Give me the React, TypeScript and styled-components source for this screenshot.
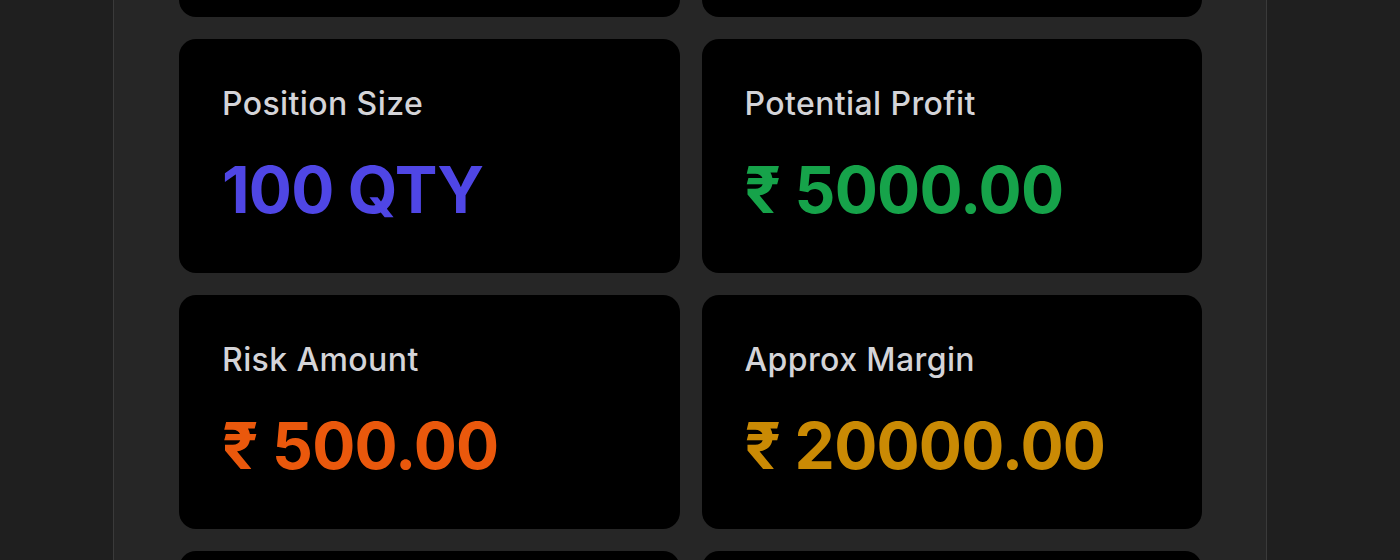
import styled, { createGlobalStyle } from "styled-components";

const GlobalStyle = createGlobalStyle`
  html, body {
    margin: 0;
    padding: 0;
    background: #1f1f1f;
    height: 100%;
    overflow: hidden;
    font-family: Inter, "Liberation Sans", sans-serif;
  }
`;

interface Stat {
  label: string;
  value: string;
  color: string;
}

const stats: Stat[] = [
  { label: "Entry Price", value: "₹ 2000.00", color: "#e4e4e7" },
  { label: "Stop Loss", value: "₹ 1995.00", color: "#dc2626" },
  { label: "Position Size", value: "100 QTY", color: "#4f46e5" },
  { label: "Potential Profit", value: "₹ 5000.00", color: "#16a34a" },
  { label: "Risk Amount", value: "₹ 500.00", color: "#ea580c" },
  { label: "Approx Margin", value: "₹ 20000.00", color: "#ca8a04" },
  { label: "Risk Reward", value: "1 : 10", color: "#e4e4e7" },
  { label: "Leverage", value: "5x", color: "#e4e4e7" },
];

function App() {
  return (
    <>
      <GlobalStyle />
      <Page>
        <Panel>
          <Grid>
            {stats.map((s) => (
              <Card key={s.label}>
                <Label>{s.label}</Label>
                <Value $color={s.color}>{s.value}</Value>
              </Card>
            ))}
          </Grid>
        </Panel>
      </Page>
    </>
  );
}

export default App;

const Page = styled.div`
  height: 560px;
  overflow: hidden;
  padding-left: 113px;
`;

// scrolled view: top row of cards sits mostly above the fold
const Panel = styled.div`
  width: 1023px;
  min-height: 1100px;
  margin-top: -217px;
  padding: 0 64px 0 65px;
  background: #262626;
  border-left: 1px solid #3a3a3a;
  border-right: 1px solid #3a3a3a;
`;

const Grid = styled.div`
  display: grid;
  grid-template-columns: 1fr 1fr;
  gap: 22px;
`;

const Card = styled.div`
  box-sizing: border-box;
  height: 234px;
  padding: 46px 43px 40px;
  background: #000;
  border-radius: 17px;
  display: flex;
  flex-direction: column;
  gap: 31px;
`;

const Label = styled.div`
  font-size: 32px;
  line-height: 38px;
  font-weight: 500;
  letter-spacing: 0.4px;
  color: #d4d4d8;
`;

const Value = styled.div<{ $color: string }>`
  font-size: 64px;
  line-height: 72px;
  font-weight: 700;
  letter-spacing: -0.8px;
  color: ${(p) => p.$color};
`;
